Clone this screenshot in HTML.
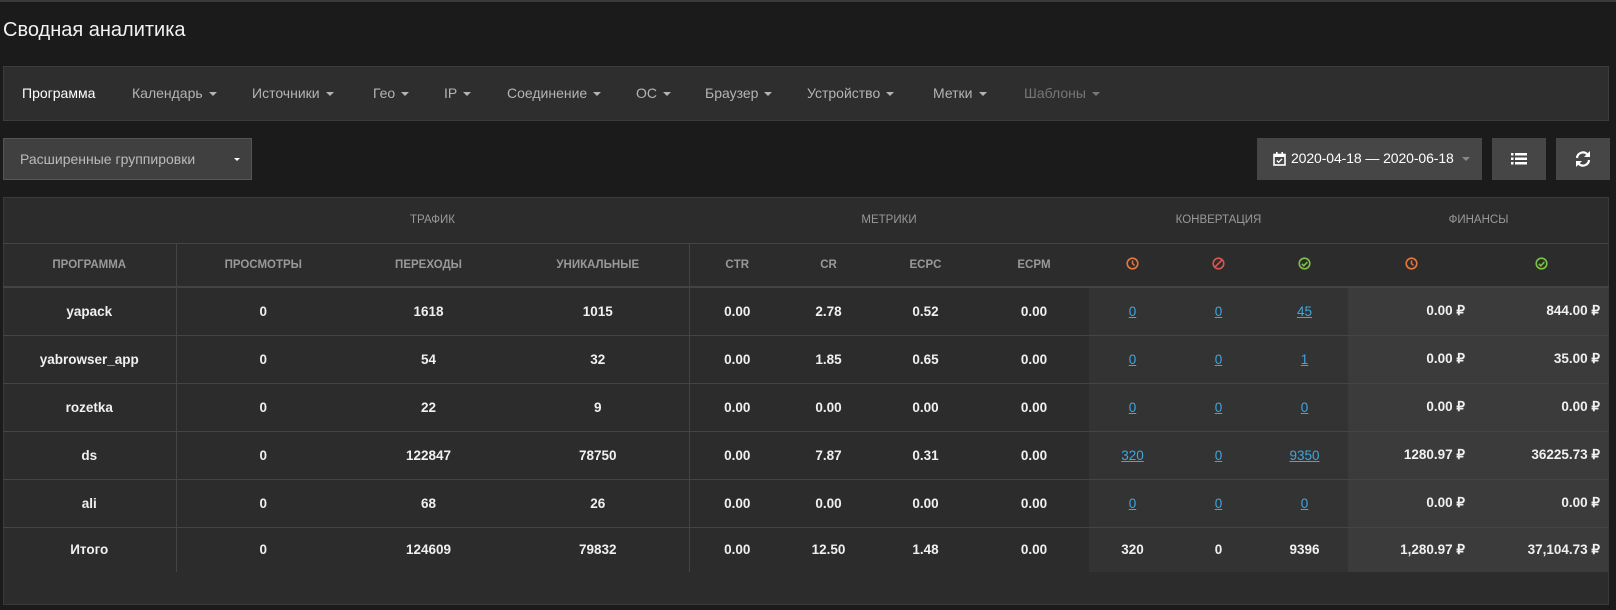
<!DOCTYPE html>
<html><head><meta charset="utf-8">
<style>
*{box-sizing:border-box;margin:0;padding:0}
body{width:1616px;height:610px;background:#1b1b1b;font-family:"Liberation Sans",sans-serif;color:#eee;position:relative;overflow:hidden}
.top{position:absolute;left:0;top:0;width:1616px;height:2px;background:#3a3a3a}
h1{position:absolute;left:3px;top:19px;font-size:20px;font-weight:normal;color:#f2f2f2}
.nav{position:absolute;left:3px;top:66px;width:1606px;height:55px;background:#2e2e2e;border:1px solid #3c3c3c}
.nav span{position:absolute;top:18px;font-size:14px;color:#b4b4b4;white-space:nowrap}
.nav span.a{color:#fff}
.nav span.d{color:#777}
.c{display:inline-block;width:0;height:0;border-left:4px solid transparent;border-right:4px solid transparent;border-top:4px solid currentColor;vertical-align:middle;margin-left:6px}
.btn{position:absolute;top:138px;height:42px;background:#464646;color:#fff;font-size:14px}
.grp{left:3px;width:249px;background:#404040;border:1px solid #555;color:#bbb}
table{position:absolute;left:3px;top:197px;border-collapse:collapse;table-layout:fixed;font-size:13.5px}
.panel{position:absolute;left:3px;top:197px;width:1606px;height:408px;background:#2c2c2c;border:1px solid #3a3a3a}
td,th{text-align:center;padding:0;font-weight:bold}
.g th{height:46px;font-size:11.5px;color:#999;font-weight:normal;border-bottom:1px solid #444}
.h th{height:44px;font-size:11.5px;color:#999;border-bottom:2px solid #444}
tbody td{height:48px;border-bottom:1px solid #444;color:#f0f0f0}
tr.t td{height:45px;border-bottom:none}
.bl{border-left:1px solid #444}
.cv{background:#333}
.fn{background:#3b3b3b;text-align:right;padding-right:9px}
a{color:#3ea7e0;text-decoration:underline;font-weight:normal}
</style></head><body>
<div class="top"></div>
<h1>Сводная аналитика</h1>
<div class="nav">
<span class="a" style="left:18px">Программа</span>
<span style="left:128px">Календарь<i class="c"></i></span>
<span style="left:248px">Источники<i class="c"></i></span>
<span style="left:369px">Гео<i class="c"></i></span>
<span style="left:440px">IP<i class="c"></i></span>
<span style="left:503px">Соединение<i class="c"></i></span>
<span style="left:632px">ОС<i class="c"></i></span>
<span style="left:701px">Браузер<i class="c"></i></span>
<span style="left:803px">Устройство<i class="c"></i></span>
<span style="left:929px">Метки<i class="c"></i></span>
<span class="d" style="left:1020px">Шаблоны<i class="c"></i></span>
</div>
<div class="btn grp"><span style="position:absolute;left:16px;top:12px">Расширенные группировки</span><i class="c" style="position:absolute;left:224px;top:19px;border-left-width:3px;border-right-width:3px;border-top-width:3px;color:#fff"></i></div>
<div class="btn" style="left:1257px;width:225px">
<svg style="position:absolute;left:16px;top:14px" width="13" height="14" viewBox="0 0 13 14"><rect x="1" y="2.5" width="11" height="10.5" fill="none" stroke="#fff" stroke-width="1.6"/><rect x="1" y="2.5" width="11" height="2.5" fill="#fff"/><rect x="3" y="0" width="1.6" height="3" fill="#fff"/><rect x="8.4" y="0" width="1.6" height="3" fill="#fff"/><path d="M3.8 8.5l1.8 1.8 3.5-3.5" fill="none" stroke="#fff" stroke-width="1.3"/></svg>
<span style="position:absolute;left:34px;top:12px;font-size:14px;letter-spacing:-0.1px">2020-04-18 — 2020-06-18</span><i class="c" style="position:absolute;left:199px;top:19px;color:#888"></i></div>
<div class="btn" style="left:1492px;width:54px"><svg style="position:absolute;left:19px;top:15px" width="16" height="12" viewBox="0 0 16 12"><g fill="#fff"><rect x="0" y="0" width="2.5" height="2.5"/><rect x="4" y="0" width="12" height="2.5"/><rect x="0" y="4.5" width="2.5" height="2.5"/><rect x="4" y="4.5" width="12" height="2.5"/><rect x="0" y="9" width="2.5" height="2.5"/><rect x="4" y="9" width="12" height="2.5"/></g></svg></div>
<div class="btn" style="left:1556px;width:54px"><svg style="position:absolute;left:18px;top:12px" width="18" height="18" viewBox="0 0 18 18"><path d="M3 8a6 6 0 0 1 10.5-3.5" fill="none" stroke="#fff" stroke-width="2.2"/><path d="M15 10a6 6 0 0 1-10.5 3.5" fill="none" stroke="#fff" stroke-width="2.2"/><path d="M16 1v6h-6z" fill="#fff"/><path d="M2 17v-6h6z" fill="#fff"/></svg></div>
<div class="panel"></div>
<table>
<colgroup><col style="width:173px"><col style="width:174px"><col style="width:157px"><col style="width:182px"><col style="width:96px"><col style="width:87px"><col style="width:107px"><col style="width:110px"><col style="width:87px"><col style="width:85px"><col style="width:87px"><col style="width:126px"><col style="width:135px"></colgroup>
<thead>
<tr class="g"><th></th><th colspan="3">ТРАФИК</th><th colspan="4">МЕТРИКИ</th><th colspan="3">КОНВЕРТАЦИЯ</th><th colspan="2">ФИНАНСЫ</th></tr>
<tr class="h"><th>ПРОГРАММА</th><th class="bl">ПРОСМОТРЫ</th><th>ПЕРЕХОДЫ</th><th>УНИКАЛЬНЫЕ</th><th class="bl">CTR</th><th>CR</th><th>ECPC</th><th>ECPM</th>
<th><svg width="13" height="13" viewBox="0 0 13 13"><circle cx="6.5" cy="6.5" r="5.3" fill="none" stroke="#e8763a" stroke-width="1.6"/><path d="M6.5 3.5v3l2 2" fill="none" stroke="#e8763a" stroke-width="1.5"/></svg></th>
<th><svg width="13" height="13" viewBox="0 0 13 13"><circle cx="6.5" cy="6.5" r="5.3" fill="none" stroke="#d9534f" stroke-width="1.6"/><path d="M3 10L10 3" stroke="#d9534f" stroke-width="1.6"/></svg></th>
<th><svg width="13" height="13" viewBox="0 0 13 13"><circle cx="6.5" cy="6.5" r="5.3" fill="none" stroke="#7cc242" stroke-width="1.6"/><path d="M3.8 6.8l2 2 3.6-3.8" fill="none" stroke="#7cc242" stroke-width="1.6"/></svg></th>
<th><svg width="13" height="13" viewBox="0 0 13 13"><circle cx="6.5" cy="6.5" r="5.3" fill="none" stroke="#e8763a" stroke-width="1.6"/><path d="M6.5 3.5v3l2 2" fill="none" stroke="#e8763a" stroke-width="1.5"/></svg></th>
<th><svg width="13" height="13" viewBox="0 0 13 13"><circle cx="6.5" cy="6.5" r="5.3" fill="none" stroke="#7cc242" stroke-width="1.6"/><path d="M3.8 6.8l2 2 3.6-3.8" fill="none" stroke="#7cc242" stroke-width="1.6"/></svg></th>
</tr></thead>
<tbody>
<tr><td>yapack</td><td class="bl">0</td><td>1618</td><td>1015</td><td class="bl">0.00</td><td>2.78</td><td>0.52</td><td>0.00</td><td class="cv"><a>0</a></td><td class="cv"><a>0</a></td><td class="cv"><a>45</a></td><td class="fn">0.00 ₽</td><td class="fn">844.00 ₽</td></tr>
<tr><td>yabrowser_app</td><td class="bl">0</td><td>54</td><td>32</td><td class="bl">0.00</td><td>1.85</td><td>0.65</td><td>0.00</td><td class="cv"><a>0</a></td><td class="cv"><a>0</a></td><td class="cv"><a>1</a></td><td class="fn">0.00 ₽</td><td class="fn">35.00 ₽</td></tr>
<tr><td>rozetka</td><td class="bl">0</td><td>22</td><td>9</td><td class="bl">0.00</td><td>0.00</td><td>0.00</td><td>0.00</td><td class="cv"><a>0</a></td><td class="cv"><a>0</a></td><td class="cv"><a>0</a></td><td class="fn">0.00 ₽</td><td class="fn">0.00 ₽</td></tr>
<tr><td>ds</td><td class="bl">0</td><td>122847</td><td>78750</td><td class="bl">0.00</td><td>7.87</td><td>0.31</td><td>0.00</td><td class="cv"><a>320</a></td><td class="cv"><a>0</a></td><td class="cv"><a>9350</a></td><td class="fn">1280.97 ₽</td><td class="fn">36225.73 ₽</td></tr>
<tr><td>ali</td><td class="bl">0</td><td>68</td><td>26</td><td class="bl">0.00</td><td>0.00</td><td>0.00</td><td>0.00</td><td class="cv"><a>0</a></td><td class="cv"><a>0</a></td><td class="cv"><a>0</a></td><td class="fn">0.00 ₽</td><td class="fn">0.00 ₽</td></tr>
<tr class="t"><td>Итого</td><td class="bl">0</td><td>124609</td><td>79832</td><td class="bl">0.00</td><td>12.50</td><td>1.48</td><td>0.00</td><td class="cv">320</td><td class="cv">0</td><td class="cv">9396</td><td class="fn">1,280.97 ₽</td><td class="fn">37,104.73 ₽</td></tr>
</tbody></table>
</body></html>
